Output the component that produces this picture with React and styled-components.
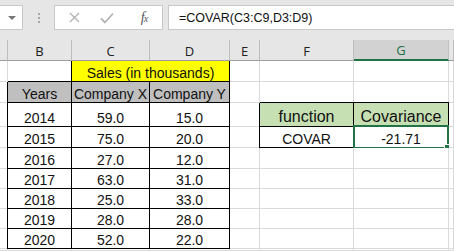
import React from "react";
import styled, { createGlobalStyle } from "styled-components";

const GlobalStyle = createGlobalStyle`
  body {
    margin: 0;
    background: #ffffff;
    font-family: "Liberation Sans", Arial, sans-serif;
  }
`;

const Page = styled.div`
  width: 454px;
  height: 251px;
  overflow: hidden;
  background: #ffffff;
`;

const FormulaBar = styled.div`
  display: flex;
  align-items: flex-start;
  height: 40px;
  padding-top: 5px;
  box-sizing: border-box;
  background: #e6e6e6;
`;

const NameBox = styled.div`
  width: 23px;
  height: 25px;
  box-sizing: border-box;
  background: #fff;
  border: 1px solid #c8c8c8;
  border-left: none;
  display: flex;
  align-items: center;
  justify-content: flex-end;
  padding-right: 6px;
`;

const Caret = styled.div`
  width: 0;
  height: 0;
  border-left: 4px solid transparent;
  border-right: 4px solid transparent;
  border-top: 4px solid #777;
`;

const Grip = styled.div`
  width: 31px;
  height: 25px;
  display: flex;
  flex-direction: column;
  align-items: center;
  justify-content: center;
  gap: 2px;
  span {
    width: 2px;
    height: 2px;
    background: #a6a6a6;
  }
`;

const IconBox = styled.div`
  width: 109px;
  height: 25px;
  box-sizing: border-box;
  background: #fff;
  border: 1px solid #c8c8c8;
  display: flex;
  align-items: center;
  padding-left: 13px;
`;

const IconSlot = styled.div`
  width: ${(p) => p.$w}px;
  display: flex;
  justify-content: center;
  align-items: center;
`;

const Fx = styled.span`
  font-family: "Liberation Serif", "Times New Roman", serif;
  font-style: italic;
  font-size: 14px;
  color: #555;
  letter-spacing: -1px;
  sub {
    font-size: 10px;
    vertical-align: baseline;
  }
`;

const FormulaInput = styled.div`
  flex: 1;
  margin-left: 5px;
  height: 25px;
  box-sizing: border-box;
  background: #fff;
  border: 1px solid #c8c8c8;
  border-right: none;
  display: flex;
  align-items: center;
  padding-left: 10px;
  font-size: 12.5px;
  color: #111;
`;

const Sheet = styled.div`
  display: grid;
  grid-template-columns: 8px 64px 78px 80px 30px 94px 95px 1fr;
  grid-template-rows: 21px 21px 21px 24px 21px 21px 20px 20px 20px 20px 1fr;
  height: 211px;
`;

const ColHead = styled.div`
  box-sizing: border-box;
  background: ${(p) => (p.$active ? "#d2d2d2" : "#e6e6e6")};
  border-right: 1px solid ${(p) => (p.$active ? "#c0c0c0" : "#bdbdbd")};
  border-bottom: ${(p) => (p.$active ? "2px solid #217346" : "1px solid #9e9e9e")};
  color: ${(p) => (p.$active ? "#217346" : "#222")};
  font-family: "Open Sans", "Liberation Sans", sans-serif;
  font-size: 13px;
  display: flex;
  align-items: center;
  justify-content: center;
  padding-top: 1px;
`;

const Cell = styled.div`
  position: relative;
  box-sizing: border-box;
  grid-column: ${(p) => (p.$span ? `span ${p.$span}` : "auto")};
  background: ${(p) => p.$fill || "#fff"};
  border-right: 1px solid ${(p) => (p.$box ? "#000" : "#dadada")};
  border-bottom: 1px solid ${(p) => (p.$box ? "#000" : "#dadada")};
  box-shadow: ${(p) =>
    [p.$left && "-1px 0 0 #000", p.$top && "0 -1px 0 #000"].filter(Boolean).join(", ") ||
    "none"};
  display: flex;
  align-items: flex-end;
  justify-content: center;
  font-size: ${(p) => p.$size || 14}px;
  line-height: 15px;
  color: #111;
  white-space: nowrap;
  padding-bottom: ${(p) => (p.$size ? 2 : 0)}px;
`;

const Selection = styled.div`
  position: absolute;
  top: -2px;
  left: -1px;
  right: -1px;
  bottom: -2px;
  border: 2px solid #217346;
  pointer-events: none;
`;

const Handle = styled.div`
  position: absolute;
  right: -4px;
  bottom: -4px;
  width: 5px;
  height: 5px;
  background: #217346;
  border: 1px solid #fff;
`;

const cols = ["", "B", "C", "D", "E", "F", "G", ""];

const rows = [
  ["2014", "59.0", "15.0"],
  ["2015", "75.0", "20.0"],
  ["2016", "27.0", "12.0"],
  ["2017", "63.0", "31.0"],
  ["2018", "25.0", "33.0"],
  ["2019", "28.0", "28.0"],
  ["2020", "52.0", "22.0"],
];

const Blank = ({ n = 1 }) =>
  Array.from({ length: n }, (_, i) => <Cell key={i} />);

const App = () => {
  return (
    <Page>
      <GlobalStyle />
      <FormulaBar>
        <NameBox>
          <Caret />
        </NameBox>
        <Grip>
          <span />
          <span />
          <span />
        </Grip>
        <IconBox>
          <IconSlot $w={12}>
            <svg width="11" height="11" viewBox="0 0 11 11">
              <path d="M1 1 L10 10 M10 1 L1 10" stroke="#b3b3b3" strokeWidth="1.4" fill="none" />
            </svg>
          </IconSlot>
          <IconSlot $w={54}>
            <svg width="14" height="12" viewBox="0 0 14 12">
              <path d="M1 6.5 L5 10.5 L13 1.5" stroke="#b3b3b3" strokeWidth="1.8" fill="none" />
            </svg>
          </IconSlot>
          <IconSlot $w={20}>
            <Fx>
              f<sub>x</sub>
            </Fx>
          </IconSlot>
        </IconBox>
        <FormulaInput>=COVAR(C3:C9,D3:D9)</FormulaInput>
      </FormulaBar>

      <Sheet>
        {cols.map((c, i) => (
          <ColHead key={i} $active={c === "G"}>
            {c}
          </ColHead>
        ))}

        {/* row 2 */}
        <Cell />
        <Cell />
        <Cell $span={2} $fill="#ffff00" $box $left>
          Sales (in thousands)
        </Cell>
        <Blank n={4} />

        {/* row 3 */}
        <Cell />
        <Cell $fill="#bfbfbf" $box $top $left>
          Years
        </Cell>
        <Cell $fill="#bfbfbf" $box>
          Company X
        </Cell>
        <Cell $fill="#bfbfbf" $box>
          Company Y
        </Cell>
        <Blank n={4} />

        {rows.map((r, i) => (
          <React.Fragment key={r[0]}>
            <Cell />
            <Cell $box $left>
              {r[0]}
            </Cell>
            <Cell $box>{r[1]}</Cell>
            <Cell $box>{r[2]}</Cell>
            <Cell />
            {i === 0 ? (
              <>
                <Cell $fill="#c6e0b4" $box $top $left $size={16}>
                  function
                </Cell>
                <Cell $fill="#c6e0b4" $box $top $size={16}>
                  Covariance
                </Cell>
                <Cell />
              </>
            ) : i === 1 ? (
              <>
                <Cell $box $left>
                  COVAR
                </Cell>
                <Cell $box>
                  -21.71
                  <Selection>
                    <Handle />
                  </Selection>
                </Cell>
                <Cell />
              </>
            ) : (
              <Blank n={3} />
            )}
          </React.Fragment>
        ))}

        <Blank n={8} />
      </Sheet>
    </Page>
  );
};

export default App;
